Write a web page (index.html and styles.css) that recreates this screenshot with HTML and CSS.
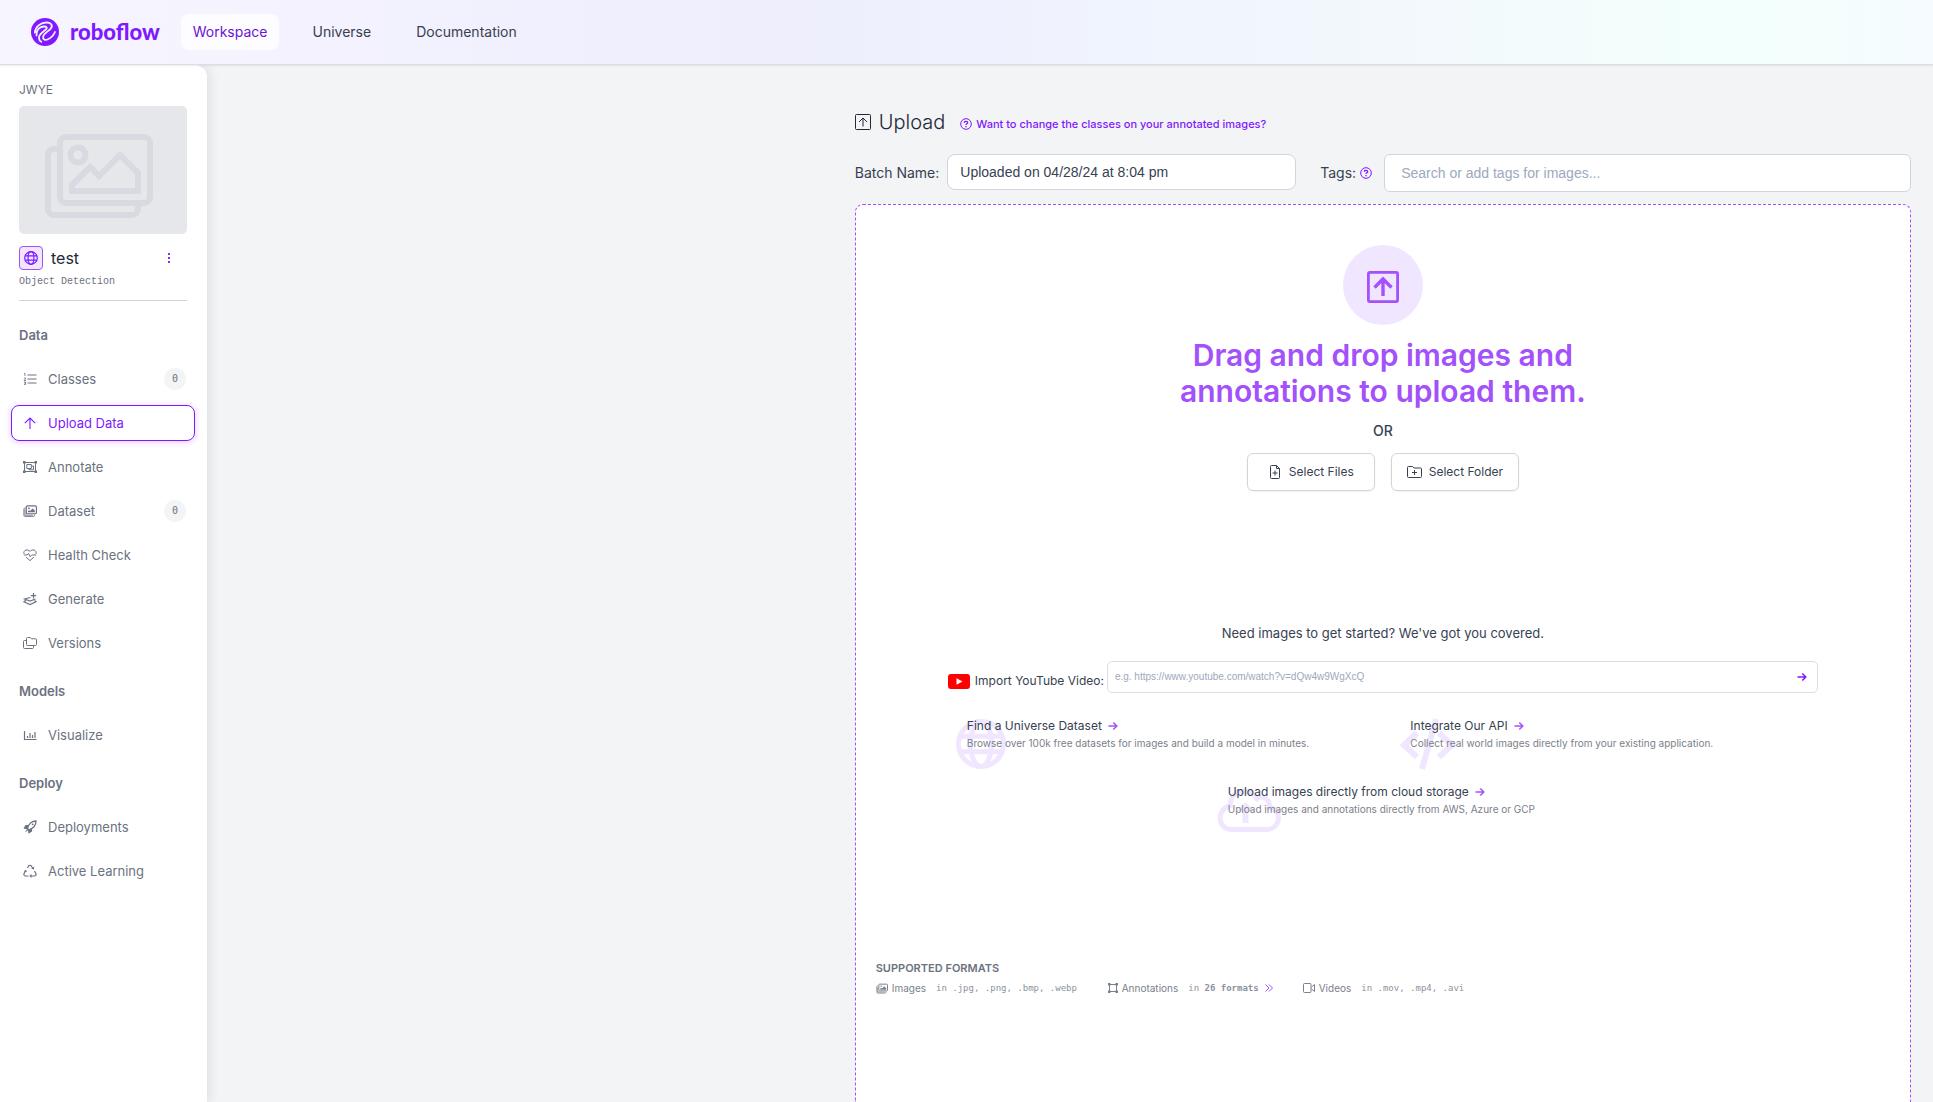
FILE: index.html
```html
<!DOCTYPE html>
<html lang="en">
<head>
<meta charset="utf-8">
<title>Upload Data - roboflow</title>
<link rel="stylesheet" href="styles.css">
</head>
<body>
<svg class="sprite" aria-hidden="true">
  <symbol id="i-images" viewBox="0 0 36 28"><path d="M4 5H3a2 2 0 0 0-2 2v18a2 2 0 0 0 2 2h26a2 2 0 0 0 2-2v-1" fill="none" stroke="currentColor" stroke-width="2"/><rect x="5" y="1" width="30" height="22" rx="2" fill="none" stroke="currentColor" stroke-width="2"/><circle cx="11" cy="7" r="2.500" fill="none" stroke="currentColor" stroke-width="2"/><path d="M9 19v-2l6-6 3 3 7-7 6 6v6z" fill="none" stroke="currentColor" stroke-width="2"/></symbol>
  <symbol id="i-photos" viewBox="0 0 16 14"><path d="M3 3.500H2A1.200 1.200 0 0 0 1 4.700V12a1.200 1.200 0 0 0 1.200 1.200H12a1.200 1.200 0 0 0 1.200-1.200v-1M2.300 5v6.800h9" fill="none" stroke="currentColor"/><rect x="3.800" y="1.200" width="11.500" height="9" rx="1.200" fill="none" stroke="currentColor" stroke-width="1.300"/><circle cx="6.800" cy="4" r="1" fill="currentColor"/><path d="M5.500 8.500V7.300l1.500-1.300 1 1 3-3 2.500 2.500v2z" fill="currentColor"/></symbol>
  <symbol id="i-globe" viewBox="0 0 24 24"><g fill="none" stroke="currentColor"><circle cx="12" cy="12" r="10.800"/><ellipse cx="12" cy="12" rx="5" ry="10.800"/><path d="M2 8.300h20M2 15.700h20"/></g></symbol>
  <symbol id="i-arrow" viewBox="0 0 10 10"><path d="M.5 5h8M5.300 1.500 8.800 5 5.300 8.500" fill="none" stroke="currentColor" stroke-width="1.500"/></symbol>
  <symbol id="i-upload" viewBox="0 0 32 32"><rect x="1.400" y="1.400" width="29.200" height="29.200" rx="1.500" fill="none" stroke="currentColor" stroke-width="2.800"/><path d="M16 25V8M7.500 16.500 16 8l8.500 8.500" fill="none" stroke="currentColor" stroke-width="3.400"/></symbol>
  <symbol id="i-help" viewBox="0 0 12 12"><circle cx="6" cy="6" r="5.300" fill="none" stroke="currentColor"/><path d="M4.300 4.700C4.300 2.800 7.700 2.800 7.700 4.700 7.700 5.800 6 5.800 6 7M6 8v1.200" fill="none" stroke="currentColor" stroke-width="1.300"/></symbol>
</svg>

<header class="topbar">
  <a class="brand" href="#">
    <svg width="28" height="28" viewBox="0 0 28 28" aria-hidden="true"><circle cx="14" cy="14" r="14" fill="#7f19ff"/><path d="M3.800 14.500C4.500 8.500 9.500 4.800 15 4.500c5-.2 7.500 3 4.500 6.300-2.500 2.700-6.500 4.500-7.300 7.700-.7 3 2 4 4.300 3 3.500-1.500 6-4 7.500-7.500M5.500 17.500C5 12.500 8 8.800 12.500 8.500c3.500-.2 4.300 1.500 2 3.300-2.800 2.200-6.500 4.200-6.500 7.700 0 2 .8 3.500 2.300 4.300" fill="none" stroke="#f5f3fe" stroke-width="1.800" stroke-linecap="round"/></svg>
    <span>roboflow</span>
  </a>
  <nav class="topnav">
    <a class="active" href="#">Workspace</a>
    <a href="#">Universe</a>
    <a href="#">Documentation</a>
  </nav>
</header>

<div class="shell">
  <aside class="sidebar">
    <div class="project">
      <div class="owner">JWYE</div>
      <div class="thumb"><svg width="108" height="84" aria-hidden="true"><use href="#i-images"/></svg></div>
      <div class="project-name">
        <span class="badge"><svg width="14" height="14" aria-hidden="true"><use href="#i-globe"/></svg></span>
        <h2>test</h2>
        <button class="dots" aria-label="Project menu"><svg width="4" height="10" viewBox="0 0 4 10"><path d="M1 0h2v2H1zM1 4h2v2H1zM1 8h2v2H1z" fill="currentColor"/></svg></button>
      </div>
      <div class="kind">Object Detection</div>
    </div>
    <nav class="menu">
      <h3>Data</h3>
      <a href="#"><svg class="ico" viewBox="0 0 14 14"><path d="M4.500 3h9M4.500 7h9M4.500 11h9" stroke="currentColor" stroke-width="1.200"/><path d="M1 1.500h1V4M1 6h1.500v1L1 8.500h2M1 10h1.500v1H1.500h1v1.500H1" fill="none" stroke="currentColor" stroke-width=".8"/></svg>Classes<span class="count">0</span></a>
      <a class="current" href="#"><svg class="ico" viewBox="0 0 14 14"><path d="M7 13V2M1.800 7.200 7 2l5.200 5.200" fill="none" stroke="currentColor" stroke-width="1.100"/></svg>Upload Data</a>
      <a href="#"><svg class="ico" viewBox="0 0 14 14"><g fill="none" stroke="currentColor"><path d="M1.500 2.500h11v9h-11z"/><path d="M3.800 4.500h4.500v4H3.800zM8.500 6h2v3.800H6V8.500"/></g><path d="M0 1h2.500v2.500H0zM11.500 1H14v2.500h-2.500zM0 10.500h2.500V13H0zM11.500 10.500H14V13h-2.500z" fill="currentColor"/></svg>Annotate</a>
      <a href="#"><svg class="ico"><use href="#i-photos"/></svg>Dataset<span class="count">0</span></a>
      <a href="#"><svg class="ico" viewBox="0 0 14 14"><path d="M1 6C0 1.500 5 .8 7 3.500 9 .8 14 1.500 13 6M3 9l4 3.600L11 9M.8 7h3.400l1.300-1.500 1.700 3.200L8.800 7h4.400" fill="none" stroke="currentColor"/></svg>Health Check</a>
      <a href="#"><svg class="ico" viewBox="0 0 14 14"><path d="M7.500 5.500 1.500 7 7 9l5.500-2M2.800 8.300 1 9.800l6 2.700 6-2.700-1.500-1.300M10.500 1v5.500M7.800 3.700h5.400" fill="none" stroke="currentColor" stroke-width="1.200"/></svg>Generate</a>
      <a href="#"><svg class="ico" viewBox="0 0 14 14"><path d="M3.500 2.500a1 1 0 0 1 1-1h3l1.200 1.300H12.500a1 1 0 0 1 1 1V8.500a1 1 0 0 1-1 1h-8a1 1 0 0 1-1-1zM3 4.500H1.500a1 1 0 0 0-1 1v6a1 1 0 0 0 1 1H9.500a1 1 0 0 0 1-1V10" fill="none" stroke="currentColor"/></svg>Versions</a>
      <h3>Models</h3>
      <a href="#"><svg class="ico" viewBox="0 0 14 14"><path d="M1.500 3v8.500h12M4.500 10V8M7 10V5M9.500 10V7M12 10V4" fill="none" stroke="currentColor" stroke-width="1.200"/></svg>Visualize</a>
      <h3>Deploy</h3>
      <a href="#"><svg class="ico" viewBox="0 0 14 14"><path d="M4.500 8.500C5.500 4 9 1 13 1c0 4-3 7.500-7 8.800z" fill="none" stroke="currentColor" stroke-width="1.300"/><path d="M5.500 5 2.500 5 .5 8.500 4 9.300 5 10.300 5.500 13.800 9 11.500V8.500L6 9.800 4.500 8.500zM4 9.500l1 1.200L2 12z" fill="currentColor"/><circle cx="9.700" cy="4.300" r=".9" fill="currentColor"/></svg>Deployments</a>
      <a href="#"><svg class="ico" viewBox="0 0 14 14"><path d="M4.500 4 5.800 1.800q1.200-1 2.400 0L9.800 4.500M11.500 7l1.500 2.700q.5 1.800-1.300 2.300H8M5.500 12H2.300Q.5 11.500 1 9.700l1.500-3" fill="none" stroke="currentColor" stroke-width="1.200"/><path d="m8.300 4.800 2.600.6.300-2.800zM8.500 10v4L6.300 12zM.8 7.300 3 5.700 4 8z" fill="currentColor"/></svg>Active Learning</a>
    </nav>
  </aside>

  <main class="main">
    <div class="content">
      <div class="title">
        <svg width="16" height="16" viewBox="0 0 16 16" aria-hidden="true"><path d="M.5 1.500a1 1 0 0 1 1-1h13a1 1 0 0 1 1 1v13a1 1 0 0 1-1 1h-13a1 1 0 0 1-1-1zM8 12.500V4M4 8l4-4 4 4" fill="none" stroke="currentColor"/></svg>
        <h1>Upload</h1>
        <a href="#"><svg width="12" height="12" aria-hidden="true"><use href="#i-help"/></svg>Want to change the classes on your annotated images?</a>
      </div>
      <div class="fields">
        <label for="batch">Batch Name:</label>
        <input class="batch" id="batch" type="text" value="Uploaded on 04/28/24 at 8:04 pm">
        <label class="tags-label" for="tags">Tags: <svg width="12" height="12" aria-hidden="true"><use href="#i-help"/></svg></label>
        <input class="tags" id="tags" type="text" placeholder="Search or add tags for images...">
      </div>

      <section class="dropzone">
        <div class="disc"><svg width="32" height="32" aria-hidden="true"><use href="#i-upload"/></svg></div>
        <h2 class="drop-title">Drag and drop images and<br>annotations to upload them.</h2>
        <div class="or">OR</div>
        <div class="picks">
          <button type="button"><svg width="14" height="14" viewBox="0 0 14 14"><path d="M3.500.5h5l3 3v9a1 1 0 0 1-1 1h-7a1 1 0 0 1-1-1v-11a1 1 0 0 1 1-1zM8.500.5v3h3M7 5.500v5M4.500 8h5" fill="none" stroke="currentColor"/></svg>Select Files</button>
          <button type="button"><svg width="15" height="14" viewBox="0 0 15 14"><path d="M.5 2.500a1 1 0 0 1 1-1H5.500l1.500 1.500h6.500a1 1 0 0 1 1 1V11.500a1 1 0 0 1-1 1h-12a1 1 0 0 1-1-1zM7.500 5v5M5 7.500h5" fill="none" stroke="currentColor"/></svg>Select Folder</button>
        </div>

        <p class="need">Need images to get started? We've got you covered.</p>
        <div class="sources">
          <div class="youtube">
            <label for="yt"><svg width="22" height="15" viewBox="0 0 22 15" aria-hidden="true"><rect width="22" height="15" rx="3" fill="#f00"/><path d="m8.500 4.200 6 3.300-6 3.300z" fill="#fff"/></svg>Import YouTube Video:</label>
            <div class="yt-box">
              <input id="yt" type="text" placeholder="e.g. https://www.youtube.com/watch?v=dQw4w9WgXcQ">
              <button type="button" aria-label="Import video"><svg width="10" height="10"><use href="#i-arrow"/></svg></button>
            </div>
          </div>
          <div class="cards">
            <a class="card" href="#">
              <svg class="mark globe" width="50" height="50" aria-hidden="true"><use href="#i-globe"/></svg>
              <strong>Find a Universe Dataset <svg width="10" height="10"><use href="#i-arrow"/></svg></strong>
              <span>Browse over 100k free datasets for images and build a model in minutes.</span>
            </a>
            <a class="card" href="#">
              <svg class="mark code" width="58" height="52" viewBox="0 0 58 52" aria-hidden="true"><path d="M18 15 5 27l13 12M40 15l13 12-13 12M37 1 23 51" fill="none" stroke="currentColor" stroke-width="6"/></svg>
              <strong>Integrate Our API <svg width="10" height="10"><use href="#i-arrow"/></svg></strong>
              <span>Collect real world images directly from your existing application.</span>
            </a>
            <a class="card wide" href="#">
              <svg class="mark cloud" width="64" height="44" viewBox="0 0 64 44" aria-hidden="true"><path d="M15 41.500h34c16 0 16-21 3-22 2-8-7-13-12-9C34-1 13 1 13 18-1 21 0 41.500 15 41.500z" fill="none" stroke="currentColor" stroke-width="5"/><path d="M25.500 35V23h-6l9-9 9 9h-6v12z" fill="currentColor"/></svg>
              <strong>Upload images directly from cloud storage <svg width="10" height="10"><use href="#i-arrow"/></svg></strong>
              <span>Upload images and annotations directly from AWS, Azure or GCP</span>
            </a>
          </div>
        </div>

        <div class="formats">
          <h4>SUPPORTED FORMATS</h4>
          <ul>
            <li><svg width="12" height="11"><use href="#i-photos"/></svg>Images <code>in .jpg, .png, .bmp, .webp</code></li>
            <li><svg width="10" height="10" viewBox="0 0 10 10"><path d="M1.500 1.500h7v7h-7z" fill="none" stroke="currentColor"/><path d="M0 0h2.500v2.500H0zM7.500 0H10v2.500H7.500zM0 7.500h2.500V10H0zM7.500 7.500H10V10H7.500z" fill="currentColor"/></svg>Annotations <code>in <b>26 formats</b></code><a href="#" aria-label="All annotation formats"><svg width="8" height="8" viewBox="0 0 8 8"><path d="M.5.5 4 4 .5 7.500M4 .5 7.500 4 4 7.500" fill="none" stroke="currentColor"/></svg></a></li>
            <li><svg width="12" height="10" viewBox="0 0 12 10"><path d="M.5 1.500a1 1 0 0 1 1-1h5.500a1 1 0 0 1 1 1v7a1 1 0 0 1-1 1H1.500a1 1 0 0 1-1-1zM8.500 4l3-2.500v7L8.500 6" fill="none" stroke="currentColor"/></svg>Videos <code>in .mov, .mp4, .avi</code></li>
          </ul>
        </div>
      </section>
    </div>
  </main>
</div>
</body>
</html>
```
FILE: styles.css
```css
* { box-sizing: border-box; }

body {
  margin: 0;
  min-height: 100vh;
  display: flex;
  flex-direction: column;
  background: #f2f4f6;
  color: #374151;
  font-family: Inter, "Liberation Sans", sans-serif;
  font-size: 14px;
  line-height: 20px;
}

h1, h2, h3, h4, p, ul { margin: 0; padding: 0; font-weight: 400; }
a { color: inherit; text-decoration: none; }
button, input { font: inherit; color: inherit; margin: 0; }
button { background: none; border: 0; padding: 0; cursor: pointer; }
svg { flex: none; display: block; }
.sprite { position: absolute; width: 0; height: 0; }

/* Top bar */
.topbar {
  position: relative;
  z-index: 2;
  height: 65px;
  display: flex;
  align-items: center;
  gap: 21px;
  padding: 0 31px;
  border-bottom: 1px solid #dcdce6;
  background: linear-gradient(90deg, #f7f5ff 0%, #eeeefd 40%, #f0f4fe 58%, #f3f8fc 72%, #f3fffc 88%, #f4fffd 93%, #f5fbff 100%);
  box-shadow: 0 1px 2px rgba(0, 0, 0, .08);
}
.brand { display: flex; align-items: center; gap: 11px; }
.brand span {
  color: #7f19ff;
  font-family: Lato, sans-serif;
  font-size: 22px;
  font-weight: 900;
}
.topnav { display: flex; gap: 21px; }
.topnav a { padding: 8px 12px; border-radius: 8px; }
.topnav .active { background: #fdfdff; color: #6b12d6; }

.shell { flex: 1; display: flex; }

/* Sidebar */
.sidebar {
  width: 207px;
  flex: none;
  padding: 15px 12px 15px 11px;
  background: #fff;
  border-top-right-radius: 12px;
  box-shadow: 2px 0 12px rgba(31, 41, 55, .1);
  color: #6b7280;
}
.project { margin: 0 8px; padding-bottom: 8px; border-bottom: 1px solid #d1d5db; }
.owner { font-size: 12px; }
.thumb {
  height: 128px;
  margin-top: 6px;
  display: grid;
  place-items: center;
  padding: 12px 8px 0 0;
  border-radius: 5px;
  background: #e5e7eb;
  color: #d7dae1;
}
.project-name { display: flex; align-items: center; gap: 8px; margin-top: 12px; }
.badge {
  width: 24px;
  height: 24px;
  display: grid;
  place-items: center;
  border: 1px solid #a351fb;
  border-radius: 4px;
  background: #f0e6ff;
  color: #7f19ff;
  stroke-width: 2;
}
.project-name h2 { flex: 1; font-size: 16px; color: #1f2937; }
.dots { padding: 4px 16px 4px 4px; color: #8b2cff; }
.kind { margin-top: 2px; font: 10px/20px "Liberation Mono", monospace; }

.menu { display: flex; flex-direction: column; gap: 8px; font-size: 13px; }
.menu h3 { margin: 12px 8px 8px; font-size: 13px; font-weight: 600; }
.menu h3:first-child { margin-top: 24px; }
.menu a {
  height: 36px;
  display: flex;
  align-items: center;
  gap: 11px;
  padding: 0 8px 0 11px;
  border: 1px solid transparent;
  border-radius: 8px;
}
.menu .current {
  border-color: #7f19ff;
  color: #7f19ff;
  box-shadow: 0 1px 6px rgba(163, 81, 251, .3);
}
.ico { width: 14px; height: 14px; }
.count {
  width: 22px;
  height: 22px;
  margin-left: auto;
  border-radius: 50%;
  background: #f2f4f6;
  font: 10px/22px "DejaVu Sans Mono", monospace;
  text-align: center;
}

/* Main column */
.main { flex: 1; display: flex; justify-content: flex-end; padding: 45px 22px 0; }
.content { width: 62.8%; display: flex; flex-direction: column; }
.title { display: flex; align-items: center; gap: 8px; color: #1f2937; }
.title h1 { font-size: 20px; font-weight: 300; line-height: 24px; }
.title a {
  display: flex;
  align-items: center;
  gap: 4px;
  margin: 4px 0 0 7px;
  color: #7f19ff;
  font-size: 11px;
  font-weight: 500;
}
.fields { display: flex; align-items: flex-start; gap: 8px; margin-top: 20px; }
.fields label { display: flex; align-items: center; gap: 4px; height: 38px; }
.fields label svg { color: #7f19ff; }
.fields input {
  min-width: 0;
  height: 38px;
  border: 1px solid #d1d5db;
  border-radius: 6px;
  background: #fff;
  font-family: "Liberation Sans", sans-serif;
}
.fields .batch { flex: 346; height: 36px; padding: 0 12px; border-radius: 8px; }
.fields .tags { flex: 528; padding: 0 16px; }
.tags-label { margin: 0 4px 0 16px; }
input::placeholder { color: #9ca9bd; opacity: 1; }

/* Drop zone */
.dropzone {
  flex: 1;
  display: flex;
  flex-direction: column;
  align-items: center;
  margin-top: 12px;
  padding: 40px 20px 0;
  border: 1px dashed #a351fb;
  border-bottom: 0;
  border-radius: 8px 8px 0 0;
  background: #fff;
}
.disc {
  width: 80px;
  height: 80px;
  display: grid;
  place-items: center;
  padding-top: 3px;
  border-radius: 50%;
  background: #f0e6ff;
  color: #a351fb;
}
.drop-title {
  margin-top: 12px;
  color: #a351fb;
  font-size: 30px;
  font-weight: 600;
  line-height: 36px;
  text-align: center;
}
.or { margin-top: 12px; font-weight: 500; }
.picks { display: flex; gap: 16px; margin-top: 12px; }
.picks button {
  width: 128px;
  height: 38px;
  display: flex;
  align-items: center;
  justify-content: center;
  gap: 7px;
  border: 1px solid #d1d5db;
  border-radius: 6px;
  font-size: 12px;
  box-shadow: 0 1px 2px rgba(0, 0, 0, .05);
}
.need { margin-top: 132px; font-size: 13px; }
.sources { width: 100%; max-width: 870px; margin-top: 18px; }
.youtube { display: flex; gap: 3px; }
.youtube label { display: flex; align-items: center; gap: 5px; padding-top: 8px; font-size: 12px; }
.yt-box {
  flex: 1;
  height: 32px;
  display: flex;
  align-items: center;
  border: 1px solid #dcdee4;
  border-radius: 5px;
}
.yt-box input {
  flex: 1;
  border: 0;
  padding: 0 7px;
  background: none;
  font-family: "Liberation Sans", sans-serif;
  font-size: 10px;
}
.yt-box button { padding: 10px; color: #7f19ff; }

.cards { display: grid; grid-template-columns: 1fr 1fr; gap: 32px 20px; padding: 23px 0 0 19px; }
.card { position: relative; display: flex; flex-direction: column; }
.card:nth-child(2) { padding-left: 8px; }
.card > * { position: relative; }
.card strong { display: flex; align-items: center; gap: 6px; font-size: 12px; font-weight: 400; }
.card strong svg { color: #a351fb; }
.card span { font-size: 10px; line-height: 14px; color: #7b808a; }
.card .mark { position: absolute; color: #f0e6ff; }
.globe { left: -11px; top: 3px; stroke-width: 2.400; }
.code { left: -3px; top: 2px; }
.cloud { left: -11px; top: 6px; }
.wide { grid-column: 1 / -1; justify-self: center; margin-right: 22px; }

.formats { width: 100%; margin-top: 142px; color: #7b808a; }
.formats h4 { font-size: 11px; font-weight: 600; color: #6b7280; }
.formats ul {
  display: grid;
  grid-template-columns: 232px 195px auto;
  justify-content: start;
  list-style: none;
}
.formats li { display: flex; align-items: center; gap: 4px; font-size: 10px; white-space: nowrap; }
.formats code { margin-left: 6px; font: 9px/20px "DejaVu Sans Mono", monospace; color: #8d929c; }
.formats li a { margin-left: 2px; color: #a351fb; }
```
